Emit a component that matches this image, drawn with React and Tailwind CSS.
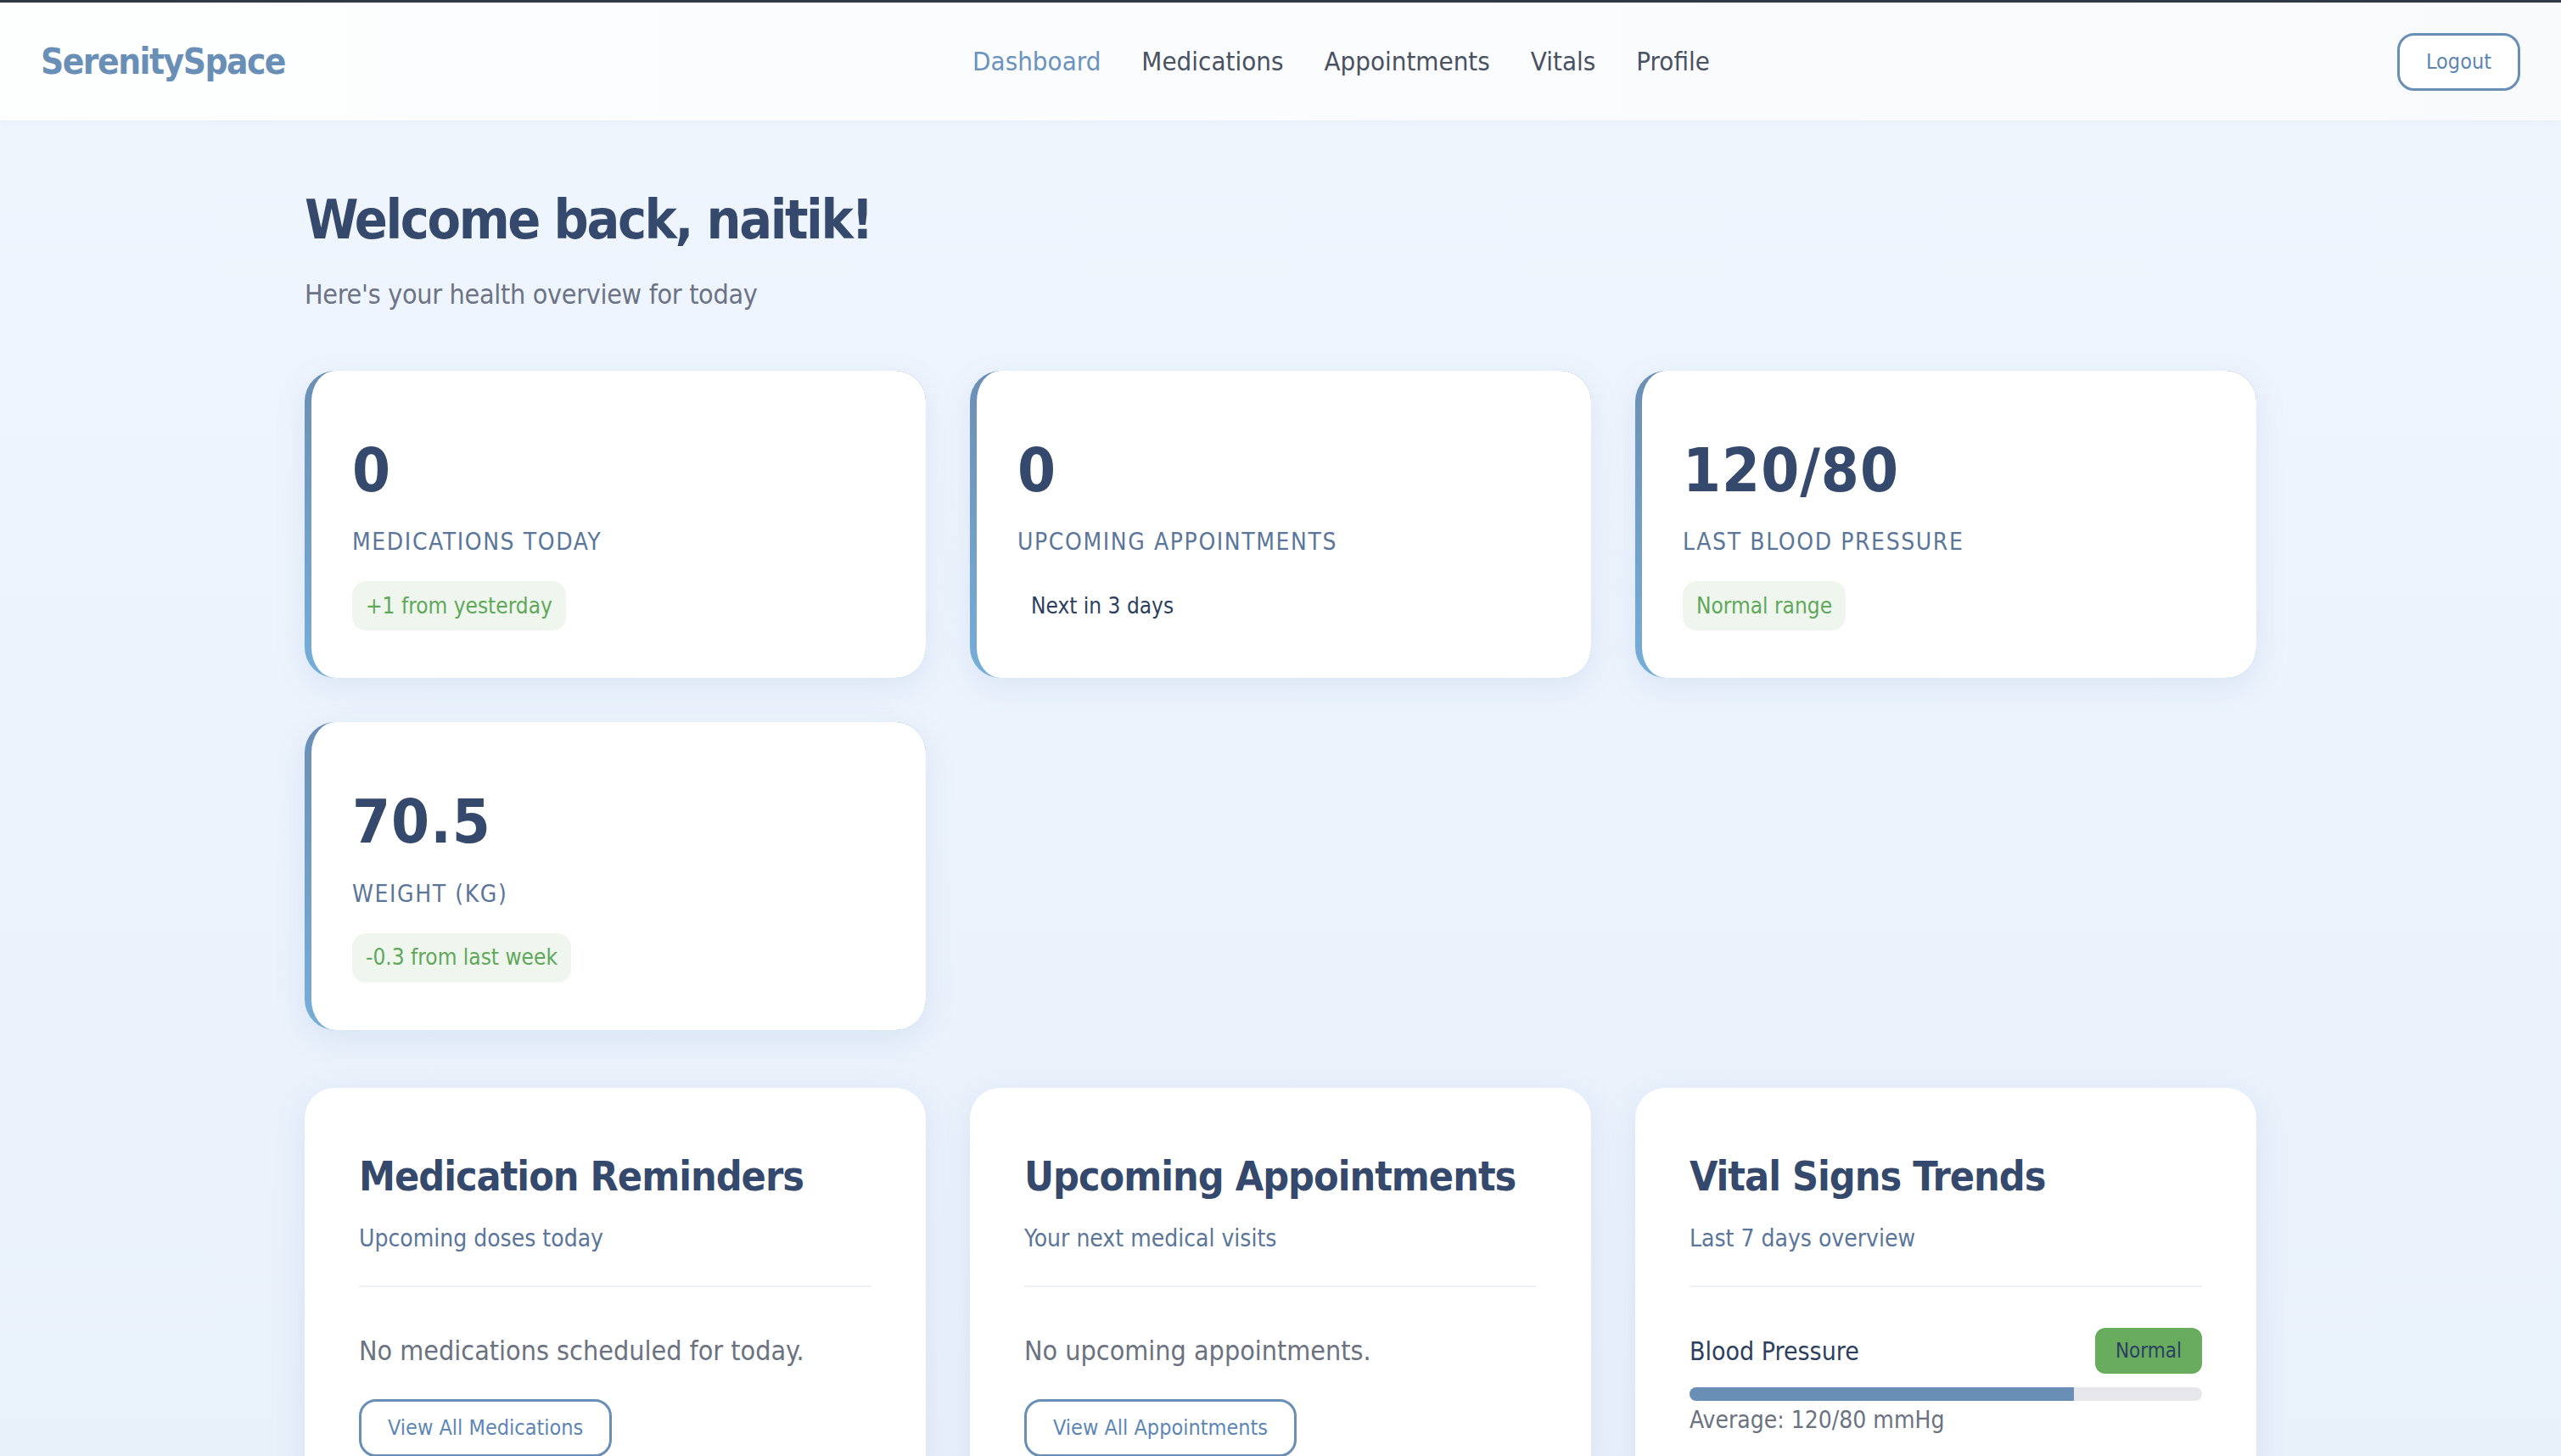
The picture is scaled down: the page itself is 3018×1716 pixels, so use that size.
import React from "react";

const stats = [
  { value: "0", label: "MEDICATIONS TODAY", badge: "+1 from yesterday", tone: "green" },
  { value: "0", label: "UPCOMING APPOINTMENTS", badge: "Next in 3 days", tone: "plain" },
  { value: "120/80", label: "LAST BLOOD PRESSURE", badge: "Normal range", tone: "green" },
  { value: "70.5", label: "WEIGHT (KG)", badge: "-0.3 from last week", tone: "green" },
];

function StatCard({ s }) {
  return (
    <div className="rounded-[36px] bg-gradient-to-b from-[#6a8fb5] to-[#76aed9] pl-[8px] shadow-[0_10px_36px_rgba(90,130,190,0.13)]">
      <div className="h-full rounded-r-[36px] rounded-l-[28px_36px] bg-white pl-[48px] pr-[48px] pt-[74px] pb-[56px]">
        <div className="text-[72px] leading-[1.2] font-bold tracking-[1px] text-[#34496b]">{s.value}</div>
        <div className="mt-[21px] text-[28px] leading-[1.5] tracking-[1.6px] text-[#5b7699]">{s.label}</div>
        <div className="mt-[25px] flex">
          <span
            className={
              s.tone === "green"
                ? "flex h-[58px] items-center rounded-[16px] bg-[#eff6ee] px-[16px] text-[26px] text-[#5fa85a]"
                : "flex h-[58px] items-center rounded-[16px] px-[16px] text-[26px] text-[#2d3f5e]"
            }
          >
            {s.badge}
          </span>
        </div>
      </div>
    </div>
  );
}

function SectionCard({ title, subtitle, children }) {
  return (
    <div className="rounded-[36px] bg-white px-[64px] pt-[76px] pb-[56px] shadow-[0_10px_36px_rgba(90,130,190,0.13)]">
      <div className="border-b-[2px] border-[#eef2f7] pb-[34px]">
        <h2 className="text-[48px] leading-[1.2] font-bold tracking-[-1px] text-[#34496b]">{title}</h2>
        <p className="mt-[24px] text-[28px] leading-[1.5] text-[#5b7699]">{subtitle}</p>
      </div>
      {children}
    </div>
  );
}

function OutlineButton({ children }) {
  return (
    <button className="h-[68px] rounded-[20px] border-[3px] border-[#6a8fb7] bg-white px-[31px] text-[25px] text-[#5d86b5]">
      {children}
    </button>
  );
}

export default function App() {
  return (
    <div className="min-h-screen bg-gradient-to-b from-[#f0f6fe] to-[#e8f0fa] font-['DejaVu_Sans_Condensed','DejaVu_Sans',sans-serif]">
      <header className="flex h-[142px] items-center justify-between border-t-[3px] border-[#2f3a44] bg-gradient-to-r from-[#fdfefe] to-[#f8fafc] px-[48px] shadow-[0_2px_12px_rgba(60,90,140,0.05)]">
        <div className="text-[42px] font-bold tracking-[-1.5px] text-[#6a8fb7]">SerenitySpace</div>
        <nav className="flex items-center gap-[48px] text-[31px] text-[#4a5262]">
          <a className="text-[#6a93bd]">Dashboard</a>
          <a>Medications</a>
          <a>Appointments</a>
          <a>Vitals</a>
          <a>Profile</a>
        </nav>
        <OutlineButton>Logout</OutlineButton>
      </header>

      <main className="mx-auto w-[2300px] pt-[79px] pb-[80px]">
        <h1 className="text-[64px] leading-[1.2] font-bold tracking-[-2.4px] text-[#34496b]">Welcome back, naitik!</h1>
        <p className="mt-[25px] text-[32px] leading-[1.5] tracking-[-0.3px] text-[#6b7385]">Here's your health overview for today</p>

        <div className="mt-[66px] grid grid-cols-3 gap-[52px]">
          {stats.map((s, i) => (
            <StatCard key={i} s={s} />
          ))}
        </div>

        <div className="mt-[68px] grid grid-cols-3 gap-[52px]">
          <SectionCard title="Medication Reminders" subtitle="Upcoming doses today">
            <p className="mt-[51px] text-[32px] leading-[1.5] text-[#6b7280]">No medications scheduled for today.</p>
            <div className="mt-[33px]">
              <OutlineButton>View All Medications</OutlineButton>
            </div>
          </SectionCard>
          <SectionCard title="Upcoming Appointments" subtitle="Your next medical visits">
            <p className="mt-[51px] text-[32px] leading-[1.5] text-[#6b7280]">No upcoming appointments.</p>
            <div className="mt-[33px]">
              <OutlineButton>View All Appointments</OutlineButton>
            </div>
          </SectionCard>
          <SectionCard title="Vital Signs Trends" subtitle="Last 7 days overview">
            <div className="mt-[48px] flex items-center justify-between">
              <span className="text-[30px] text-[#2d3f5e]">Blood Pressure</span>
              <span className="flex h-[54px] items-center rounded-[12px] bg-[#67ad5d] px-[24px] text-[24px] text-[#2d4063]">Normal</span>
            </div>
            <div className="mt-[16px] h-[16px] w-full overflow-hidden rounded-full bg-[#e5e7eb]">
              <div className="h-full bg-[#6a8fb7]" style={{ width: "75%" }} />
            </div>
            <p className="mt-[2px] text-[28px] leading-[1.5] text-[#6b7280]">Average: 120/80 mmHg</p>
          </SectionCard>
        </div>
      </main>
    </div>
  );
}
